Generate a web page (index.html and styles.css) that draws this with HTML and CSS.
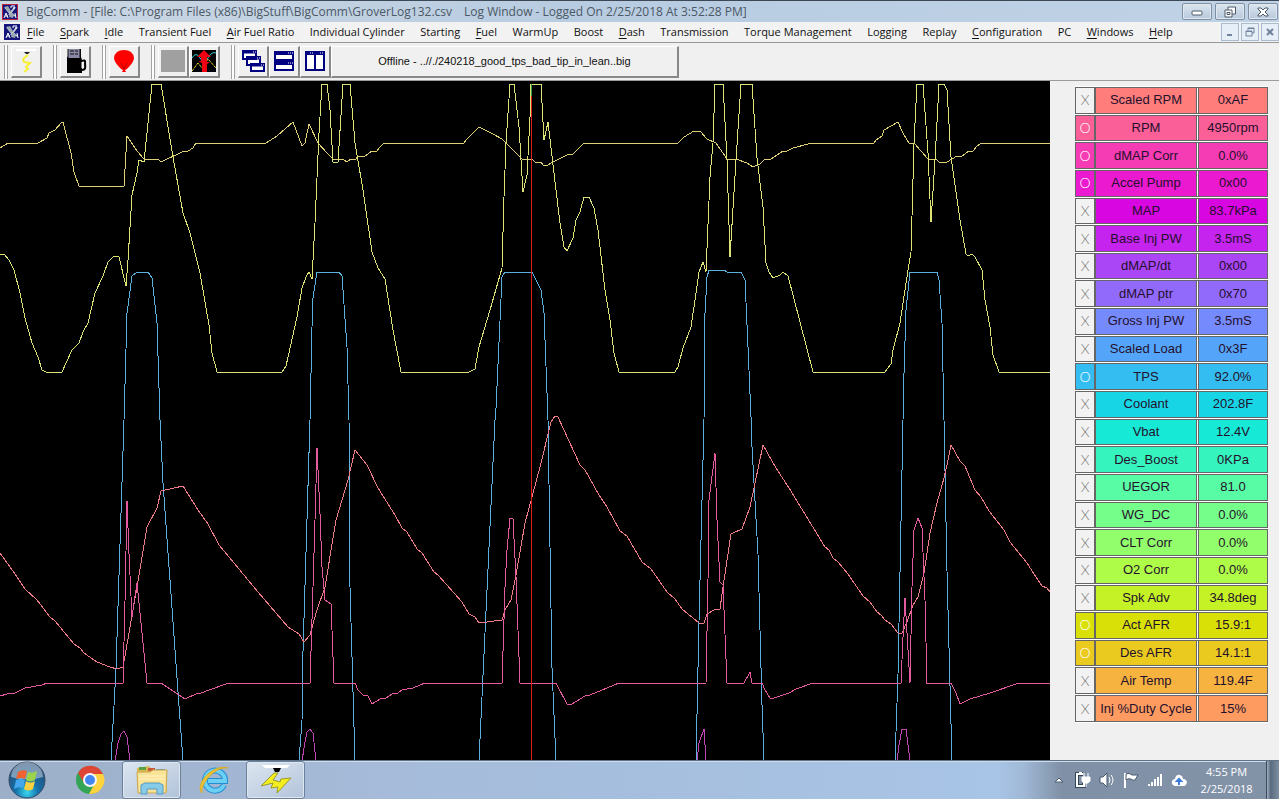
FILE: index.html
```html
<!DOCTYPE html>
<html lang="en">
<head>
<meta charset="utf-8">
<title>BigComm</title>
<link rel="stylesheet" href="styles.css">
</head>
<body>
<svg class="defs" aria-hidden="true">
  <symbol id="app-icon" viewBox="0 0 16 16">
    <path fill="#15157c" d="M0 0h16v16H0z"/>
    <path d="M3 3l4 5 6 4M13 3l-3 4-3 4" stroke="#c3ccd4" stroke-width="2" fill="none"/>
    <path d="M3 3l3-1 3 5-2 2zM8 9l4 1-1 4-4-1z" fill="#9aa7b0"/>
    <path d="M2 14l2-5 2 5M3 12h3M9 4V2h4M11 4h2M13 9l1 5" stroke="#fff" fill="none"/>
  </symbol>
</svg>
<div class="app">
  <header class="titlebar">
    <svg class="title-icon framed"><use href="#app-icon"/></svg>
    <h1 class="title"><span>BigComm - [File: C:\Program Files (x86)\BigStuff\BigComm\GroverLog132.csv</span><span>Log Window - Logged On 2/25/2018 At 3:52:28 PM]</span></h1>
    <div class="win-buttons">
      <button class="win-btn" aria-label="Minimize"><svg viewBox="0 0 12 12"><rect x="1" y="5" width="10" height="4" rx="1" fill="#fff" stroke="#4e5a68"/></svg></button>
      <button class="win-btn" aria-label="Restore"><svg viewBox="0 0 12 12"><path d="M4 1h7.500v7H4z" fill="#fff" stroke="#4e5a68"/><path d="M1 4h7v7H1z" fill="#fff" stroke="#4e5a68"/><path d="M3 6.500h3v2H3z" fill="none" stroke="#4e5a68"/></svg></button>
      <button class="win-btn" aria-label="Close"><svg viewBox="0 0 12 12"><path d="M1 2h3l2 2 2-2h3v1L8 6l3 3v1H8L6 8l-2 2H1V9l3-3-3-3z" fill="#fff" stroke="#4e5a68"/></svg></button>
    </div>
  </header>
  <nav class="menubar">
    <svg class="title-icon"><use href="#app-icon"/></svg>
    <div class="menus">
      <button><u>F</u>ile</button><button><u>S</u>park</button><button><u>I</u>dle</button><button>Transient Fuel</button><button><u>A</u>ir Fuel Ratio</button><button>Individual Cylinder</button><button>Starting</button><button><u>F</u>uel</button><button>WarmUp</button><button>Boost</button><button><u>D</u>ash</button><button>Transmission</button><button>Torque Management</button><button>Logging</button><button>Replay</button><button><u>C</u>onfiguration</button><button>PC</button><button><u>W</u>indows</button><button><u>H</u>elp</button>
    </div>
    <div class="mdi-buttons">
      <button aria-label="Minimize log"><svg viewBox="0 0 10 10"><path d="M2 8h5" stroke="#71839a" stroke-width="2"/></svg></button>
      <button aria-label="Restore log"><svg viewBox="0 0 10 10"><path d="M3 3V1h6v5H7M3 1.500h6M1 4h6v5H1zM1 4.500h6" fill="none" stroke="#71839a"/></svg></button>
      <button aria-label="Close log"><svg viewBox="0 0 10 10"><path d="M2 2l6 6M8 2L2 8" stroke="#71839a" stroke-width="2"/></svg></button>
    </div>
  </nav>
  <div class="toolbar">
    <div class="band"><button class="tool" aria-label="Spark"><svg viewBox="0 0 24 24"><path fill="#fff" d="M2 0h20v2H2z"/><path fill="#222" d="M10 3h6l-2 2h-2z"/><path d="M14 6l-5 4 1 3 6 1-4 4 2 2-4 3" fill="none" stroke="#f6f032" stroke-width="2"/></svg></button></div>
    <div class="band"><button class="tool" aria-label="Fuel"><svg viewBox="0 0 24 24"><path d="M4 8l2-1V0h12v8l1 3v13H4z"/><path fill="#8888a4" d="M5 0h12v9H5z"/><path d="M7 2h4M12 2h3M7 5h4M12 5h3M5 0v9M17 0v9" stroke="#111"/><path d="M17 13q6-4 5 2c1 6-1 6-4 6" stroke="#000" stroke-width="2" fill="none"/><path d="M19 13v6" stroke="#fff"/></svg></button></div>
    <div class="band"><button class="tool" aria-label="Record marker"><svg viewBox="0 0 24 24"><path fill="#f00" d="M2 9Q3 1 12 1q9 0 10 8 0 4-7 11l-2 1 1 2h-4l1-2-2-1Q2 13 2 9z"/><path d="M9 14l3 6 3-6" stroke="#b00" fill="none"/></svg></button></div>
    <div class="band"><button class="tool" aria-label="Stop" disabled><svg viewBox="0 0 24 24"><path fill="#a0a0a0" d="M0 1h24v22H0z"/></svg></button><button class="tool" aria-label="Load log"><svg viewBox="0 0 24 24"><path d="M0 1h24v22H0z"/><path d="M0 9q4-7 8 0t8 0 8-5" stroke="#28cbd2" fill="none"/><path d="M0 22l6-8 4 5 6-9 8 9" stroke="#eee42a" fill="none" stroke-dasharray="3 1"/><path fill="#f00010" d="M12 1l7 7h-4v5h3l-3 2v8h-5v-9l-4-2h3V8H5z"/></svg></button></div>
    <div class="band"><button class="tool" aria-label="Cascade windows"><svg viewBox="0 0 24 24"><g fill="#fff" stroke="#000080" stroke-width="2"><path d="M2 2h13v8H2zM6 8h13v8H6zM10 15h13v7H10z"/></g><path d="M1 3h15M5 9h15M9 16h15" stroke="#000080" stroke-width="3"/><path d="M12 3h1M14 3h1M16 9h1M18 9h1M20 16h1M22 16h1" stroke="#fff"/></svg></button><button class="tool" aria-label="Tile horizontally"><svg viewBox="0 0 24 24"><path d="M3 3h18v8H3zM3 13h18v8H3z" fill="#fff" stroke="#000080" stroke-width="2"/><path d="M2 4h20M2 14h20" stroke="#000080" stroke-width="4"/><path d="M16 4h1M18 4h1M20 4h1M16 14h1M18 14h1M20 14h1" stroke="#fff"/></svg></button><button class="tool" aria-label="Tile vertically"><svg viewBox="0 0 24 24"><path d="M3 3h18v18H3zM12 3v18" fill="#fff" stroke="#000080" stroke-width="2"/><path d="M2 4h20" stroke="#000080" stroke-width="4"/><path d="M7 4h1M9 4h1M17 4h1M19 4h1" stroke="#fff"/></svg></button><button class="status-btn">Offline - ..//./240218_good_tps_bad_tip_in_lean..big</button></div>
  </div>
  <main class="workspace">
    <svg class="chart" viewBox="0 81 1050 679" preserveAspectRatio="none" role="img" aria-label="Engine data log">
      <polyline class="des-afr" points="0,148 8,143 38,143 47,138 49,133 55,130 62,122 63,122 71,153 74,172 79,186 124,186 127,136 137,151 144,159 158,159 161,162 182,152 188,151 193,148 196,143 266,143 277,136 293,122 302,146 305,143 309,124 318,143 327,153 333,159 343,159 347,162 351,159 356,159 358,156 365,156 372,151 377,151 380,147 384,143 464,143 467,139 479,127 493,134 502,139 507,144 522,159 532,159 535,162 541,162 543,165 548,165 553,162 567,155 573,154 584,143 678,143 684,137 694,131 700,131 707,139 716,143 727,159 736,159 747,163 753,167 760,164 765,159 771,159 783,151 787,151 793,148 812,143 874,143 876,140 882,136 884,130 898,122 903,133 909,143 914,143 928,159 936,159 939,162 947,162 957,156 962,156 969,151 973,151 977,146 982,143 1050,143"/>
      <polyline class="act-afr" points="0,254 4,254 9,260 14,270 20,293 25,318 32,343 38,357 42,370 46,372 62,372 72,350 79,343 83,332 88,323 95,293 103,276 108,262 113,257 118,256 119,257 126,286 128,260 132,195 137,173 139,160 144,162 152,84 161,84 173,157 183,213 190,233 200,273 209,325 212,353 217,372 282,372 286,366 297,317 302,288 306,277 309,272 312,279 315,223 319,133 322,84 327,84 330,110 333,162 338,162 343,84 350,84 355,143 363,190 372,252 378,268 385,279 393,330 401,372 469,372 475,369 479,347 490,310 502,268 504,197 506,143 510,84 514,84 519,127 523,192 527,175 530,117 531,84 541,84 544,140 548,122 553,165 560,223 564,247 567,251 573,238 576,220 580,212 584,197 589,197 594,208 598,230 605,290 610,320 614,353 619,372 675,372 678,367 683,348 691,327 695,300 699,272 703,262 706,272 710,177 713,143 715,84 723,84 727,160 730,257 736,160 741,84 752,84 757,158 763,207 766,263 769,272 773,278 780,275 783,272 788,276 800,322 813,372 885,372 891,364 893,350 900,323 906,283 911,252 914,143 917,84 923,84 928,153 931,222 935,160 939,84 944,84 947,90 951,157 960,220 966,254 968,256 972,254 975,257 982,270 985,300 990,327 993,355 999,372 1050,372"/>
      <polyline class="tps" points="111,761 116,669 124,420 127,313 132,276 137,272 148,272 152,278 157,323 160,420 163,483 183,761"/>
      <polyline class="tps" points="299,761 302,721 303,651 310,420 312,327 313,298 317,272 339,272 342,276 347,347 349,420 350,587 355,761"/>
      <polyline class="tps" points="479,761 484,654 495,420 496,408 502,277 505,272 532,272 541,290 544,313 547,393 548,420 550,547 552,668 556,761"/>
      <polyline class="tps" points="696,761 699,621 704,420 705,313 707,277 709,270 724,270 727,272 741,272 745,280 748,347 751,417 752,447 758,554 762,705 764,761"/>
      <polyline class="tps" points="895,761 898,674 903,420 904,373 906,310 910,272 937,272 939,280 942,323 944,420 947,571 952,761"/>
      <polyline class="rpm" points="0,553 15,574 25,589 37,600 50,617 55,621 74,644 80,648 84,653 97,662 110,667 117,669 123,667 129,633 137,587 147,527 157,508 161,491 183,486 198,510 208,524 219,545 234,563 258,592 276,613 288,627 299,634 304,642 310,635 316,613 325,587 336,520 348,480 355,450 367,465 378,488 395,515 402,528 407,532 417,549 422,553 434,572 438,575 462,602 469,614 475,617 479,623 502,620 505,610 511,600 516,575 525,523 532,497 540,467 551,422 555,416 558,417 580,465 585,470 599,495 607,507 620,531 627,536 642,562 651,569 667,592 675,599 682,609 699,623 704,623 707,614 714,610 720,609 723,587 726,567 731,534 742,529 750,507 763,445 776,468 789,488 825,547 829,550 833,558 838,562 848,574 863,596 870,602 877,612 881,615 885,620 891,624 898,633 902,633 907,622 913,605 918,597 924,573 930,533 937,503 944,478 947,465 951,445 960,461 965,466 975,490 981,497 989,511 1004,530 1010,542 1027,563 1034,574 1042,586 1047,588 1050,592"/>
      <polyline class="dmap" points="0,696 7,694 15,693 25,688 42,685 47,683 123,683 125,601 127,501 129,554 132,617 137,583 147,683 161,683 185,699 196,694 201,693 209,690 229,683 310,683 313,587 315,520 317,448 320,514 322,567 325,600 331,604 334,683 355,683 358,690 363,695 368,696 372,704 380,699 386,698 392,694 398,693 402,690 413,688 425,683 502,683 505,587 507,550 510,518 513,519 516,577 520,683 556,683 567,704 572,704 585,696 590,695 619,683 706,683 708,580 709,500 715,453 717,520 720,582 723,585 727,683 744,683 750,672 752,683 762,683 765,690 770,698 774,698 789,693 796,689 813,683 901,683 903,637 905,598 907,633 910,683 912,587 914,530 918,518 922,528 925,600 927,683 951,683 956,693 960,704 970,699 990,693 1019,683 1050,683"/>
      <path class="accel" d="M115 761L118 743L121 734L124 731L127 737L130 761M302 761L305 742L307 732L310 729L313 733L316 761M697 761L699 743L704 729L706 761M897 761L899 745L902 729L906 729L910 761"/>
      <rect class="cursor-top" x="531" y="84" width="1" height="12"/>
      <rect class="cursor" x="531" y="96" width="1" height="664"/>
    </svg>
    <aside class="panel">
      <table class="channels" aria-label="Logged channels"><tbody id="channels"></tbody></table>
    </aside>
  </main>
  <footer class="taskbar">
    <button class="start" aria-label="Start"><svg viewBox="0 0 38 38"><defs><radialGradient id="orb" cx=".5" cy=".85" r=".8"><stop offset="0" stop-color="#39d6ee"/><stop offset=".4" stop-color="#1370a9"/><stop offset="1" stop-color="#2b4a70"/></radialGradient></defs><circle cx="19" cy="19" r="18" fill="url(#orb)" stroke="#344b66"/><path d="M3 16a16 15 0 0 1 32 0q-16 5-32 0z" fill="#c6d6e3" opacity=".55"/><path d="M10 11q4-3 9-1l-2 8q-4-2-9 0z" fill="#ee6330"/><path d="M20 11q4 2 9-1l-2 9q-5 3-9 0z" fill="#9bd34a"/><path d="M8 19q4-2 9 0l-2 8q-4-2-9 1z" fill="#45a8ee"/><path d="M18 20q4 3 9 0l-2 8q-5 3-9 0z" fill="#fbd040"/></svg></button>
    <button class="task" aria-label="Chrome"><svg viewBox="0 0 32 32"><circle cx="16" cy="16" r="14" fill="#34a456"/><path d="M4 9A14 14 0 0 1 29 10H16l-6 9z" fill="#df4535"/><path d="M29 10A14 14 0 0 1 15 30l7-13-3-7z" fill="#fdd23e"/><circle cx="16" cy="16" r="7" fill="#f4f6fa"/><circle cx="16" cy="16" r="5" fill="#4386ef"/></svg></button>
    <button class="task running" aria-label="Explorer"><svg viewBox="0 0 32 32"><path d="M1 4l12-2 3 4h13l2 2v20H2z" fill="#dcb750"/><path d="M3 3h7v3H3z" fill="#58a343"/><path d="M12 4h7v3h-7z" fill="#c95838"/><path d="M20 5h9v3h-9z" fill="#4f91c9"/><path d="M1 8h13l3-2h14l-1 23H2z" fill="#f8e397" stroke="#caa54c"/><path d="M3 12h26M3 15h26" stroke="#fff5c5"/><path d="M5 21l4-2h14l4 2v9h-6v-5H11v5H5z" fill="#88cbe9" stroke="#5499c3"/></svg></button>
    <button class="task" aria-label="Internet Explorer"><svg viewBox="0 0 32 32"><path d="M26 21A10 10 0 1 1 27 17H10" fill="none" stroke="#268cd0" stroke-width="6"/><path d="M26 21A10 10 0 1 1 27 17H10" fill="none" stroke="#6bd0f4" stroke-width="4"/><path d="M4 29C-4 21 15-1 30 4c-13-2-28 16-26 25z" fill="#ecc438" stroke="#d7ac29"/></svg></button>
    <button class="task running" aria-label="BigComm"><svg viewBox="0 0 32 32"><path fill="#fff" d="M2 1h28l-3 3H5z"/><path d="M13 4h8l-2 4h-4z"/><path d="M14 9h4l-5 7 7 2 1-3 10-1-14 15 1-6-7 1 2-5-12 3z" fill="#f4ee20" stroke="#9a9b25"/></svg></button>
    <div class="tray">
      <svg class="caret" viewBox="0 0 16 16"><path d="M4 10l4-4 4 4z" fill="#fff" stroke="#465c72"/></svg>
      <svg viewBox="0 0 16 16"><path d="M8 2H2v12h7v-3" fill="none" stroke="#334559" stroke-width="4"/><path d="M8 2H2v12h7v-3M4 1h3" fill="none" stroke="#fff" stroke-width="2"/><path d="M7 5h8v4l-2 2H9L7 9zM9 1v4M13 1v4M11 10v5" fill="#fff" stroke="#fff"/></svg>
      <svg viewBox="0 0 16 16"><path d="M1 5h3l4-4v14l-4-4H1z" fill="#fff" stroke="#47596c"/><path d="M10 5q2 3 0 6M12 3q4 5 0 10" fill="none" stroke="#fff"/></svg>
      <svg viewBox="0 0 16 16"><path d="M2 1v15" stroke="#fff" stroke-width="2"/><path d="M3 2q3-2 6 1h6l-3 5q-2 1-4-1-3-1-5 1z" fill="#fff" stroke="#46596e"/></svg>
      <svg viewBox="0 0 16 16"><path d="M2 12v2M5 10v4M8 7v7M11 5v9M14 2v12" stroke="#fff" stroke-width="2"/></svg>
      <svg viewBox="0 0 16 16"><path d="M4 14q-4-1-3-5 1-2 3-2 1-5 5-4 3 1 3 4 3 0 4 3-1 4-3 4z" fill="#fff"/><path d="M8 13V8M6 9l2-2 2 2z" fill="#397cdd" stroke="#397cdd" stroke-width="2"/></svg>
    </div>
    <div class="clock"><time>4:55 PM</time><span>2/25/2018</span></div>
    <button class="show-desktop" aria-label="Show desktop"></button>
  </footer>
</div>
<script src="script.js"></script>
</body>
</html>
```
FILE: styles.css
```css
* { box-sizing: border-box; }
body { margin: 0; font-family: "Open Sans", "Noto Sans", sans-serif; font-size: 11px; color: #111; }
button { font: inherit; color: inherit; background: none; border: 0; padding: 0; margin: 0; }
svg { display: block; }
.defs { width: 0; height: 0; position: absolute; }
.app { display: flex; flex-direction: column; height: 100vh; background: #f0f0f0; }

.titlebar { display: flex; align-items: center; height: 22px; padding: 0 1px 0 2px; border-top: 1px solid #3c4856; background: linear-gradient(90deg, #ccd7e2, #b8cce1 45%, #bfd2e6); }
.title-icon { flex: none; width: 16px; height: 16px; }
.framed { outline: 1px solid #b8243c; outline-offset: -1px; }
.title { display: flex; gap: 12px; flex: 1; margin: 0 0 0 8px; font-size: 12px; font-weight: 400; color: #4b5865; white-space: nowrap; }
.win-buttons { display: flex; gap: 3px; }
.win-btn { display: grid; place-items: center; width: 30px; height: 17px; border: 1px solid #7f90a3; border-radius: 2px; background: linear-gradient(#dbe5ef, #b7c9dc); box-shadow: inset 0 0 0 1px #dfe8f1; }
.win-btn svg { width: 12px; height: 12px; }

.menubar { display: flex; align-items: center; height: 21px; padding-left: 4px; border-bottom: 1px solid #979797; background: #f2f2f2; }
.menus { display: flex; flex: 0 1 1146px; justify-content: space-between; margin: 0 auto 0 7px; }
.menus button { line-height: 18px; white-space: nowrap; }
.menus u { text-underline-offset: 2px; }
.mdi-buttons { display: flex; gap: 2px; }
.mdi-buttons button { display: grid; place-items: center; width: 18px; height: 18px; border: 1px solid #a9bccf; background: #e6eff8; }
.mdi-buttons svg { width: 10px; height: 10px; }

.toolbar { display: flex; align-items: center; gap: 11px; height: 38px; padding: 0 4px; border-bottom: 1px solid #9b9b9b; }
.band { display: flex; align-items: center; height: 34px; padding-left: 6px; border-left: 1px solid #a3a3a3; box-shadow: inset 2px 0 #fff, inset 3px 0 #a3a3a3; }
.tool { display: grid; place-items: center; width: 31px; height: 32px; }
.tool, .status-btn { border: 1px solid; border-color: #fff #888 #888 #fff; border-right-width: 2px; border-bottom-width: 2px; background: #f0f0f0; }
.tool svg { width: 24px; height: 24px; }
.status-btn { width: 348px; height: 32px; font-family: "Liberation Sans", Arial, sans-serif; font-size: 11px; }

.workspace { display: flex; flex: 1; min-height: 0; }
.chart { flex: 1; min-width: 0; height: 100%; background: #000; }
.chart polyline, .chart path { fill: none; stroke-width: 1; shape-rendering: crispEdges; vector-effect: non-scaling-stroke; }
.des-afr { stroke: #dfd076; }
.act-afr { stroke: #dce274; }
.tps { stroke: #5cb0dc; }
.rpm { stroke: #ee7c86; }
.dmap { stroke: #e45a9e; }
.accel { stroke: #c044b4; }
.cursor { fill: #e01c1c; }
.cursor-top { fill: #2f9a40; }

.panel { flex: none; padding: 5px 11px 37px 25px; }
.channels { width: 193px; height: 100%; table-layout: fixed; border-spacing: 0 1px; background: #fff; font: 13px/16px "Liberation Sans", Arial, sans-serif; color: #24102c; }
.channels td, .channels th { padding: 0; border: 1px solid #666; text-align: center; font-weight: 400; white-space: nowrap; background-clip: padding-box; background-color: var(--channel); }
.channels td:first-child { width: 20px; background-color: #f2f2f2; }
.channels .shown td:first-child { background-color: var(--channel); }
.channels th { border-right: 0; }
.channels td:last-child { width: 72px; border-left: 3px double #666; }
.toggle { display: block; width: 100%; font: 300 14px/20px Lato, sans-serif; color: #777; }
.shown .toggle { color: #fff; }

.taskbar { display: flex; align-items: stretch; height: 39px; padding-left: 8px; border-top: 1px solid #5e7288; box-shadow: inset 0 1px #d0dcea; background: linear-gradient(90deg, #9dafc8, #a5bbd9 30%, #a8c4e6 78%, #a0b9d7 80%, #8091a7 83%, #8293a8); }
.start { width: 38px; display: grid; place-items: center; }
.start svg { width: 38px; height: 38px; }
.task { display: grid; place-items: center; width: 59px; margin-left: 3px; }
.task:nth-child(2) { margin-left: 14px; }
.task svg { width: 32px; height: 32px; }
.running { border: 1px solid #6d819b; border-radius: 3px; background: linear-gradient(150deg, #dce6f1, #b2c3d9); box-shadow: inset 0 0 0 1px #dde7f2; }
.tray { display: flex; align-items: center; gap: 8px; margin-left: auto; }
.tray svg { width: 16px; height: 16px; }
.clock { display: flex; flex-direction: column; align-items: center; justify-content: center; width: 79px; font-size: 11px; line-height: 17px; color: #fff; }
.show-desktop { width: 13px; border-left: 1px solid #3b4b5e; background: linear-gradient(90deg, #a0afbf, #5b6b7e 30%, #7f8fa2); }
```
FILE: script.js
```js
const channels = [
  ["Scaled RPM", "0xAF", "#ff7d7b", false],
  ["RPM", "4950rpm", "#fb5f98", true],
  ["dMAP Corr", "0.0%", "#f63cb4", true],
  ["Accel Pump", "0x00", "#eb1ad0", true],
  ["MAP", "83.7kPa", "#d806e0", false],
  ["Base Inj PW", "3.5mS", "#c424ee", false],
  ["dMAP/dt", "0x00", "#aa46f6", false],
  ["dMAP ptr", "0x70", "#916afb", false],
  ["Gross Inj PW", "3.5mS", "#758afd", false],
  ["Scaled Load", "0x3F", "#54a5fa", false],
  ["TPS", "92.0%", "#34bdf0", true],
  ["Coolant", "202.8F", "#18d5e5", false],
  ["Vbat", "12.4V", "#16e9d6", false],
  ["Des_Boost", "0KPa", "#36f4bd", false],
  ["UEGOR", "81.0", "#57fca4", false],
  ["WG_DC", "0.0%", "#76fe8a", false],
  ["CLT Corr", "0.0%", "#93fe6b", false],
  ["O2 Corr", "0.0%", "#aefb48", false],
  ["Spk Adv", "34.8deg", "#c5f226", false],
  ["Act AFR", "15.9:1", "#d9e008", true],
  ["Des AFR", "14.1:1", "#ebca20", true],
  ["Air Temp", "119.4F", "#f6b340", false],
  ["Inj %Duty Cycle", "15%", "#fd9b60", false]
];

const body = document.getElementById("channels");
for (const [name, value, color, shown] of channels) {
  const row = body.insertRow();
  row.style.setProperty("--channel", color);
  row.classList.toggle("shown", shown);
  const toggle = document.createElement("button");
  toggle.className = "toggle";
  toggle.textContent = shown ? "O" : "X";
  toggle.setAttribute("aria-label", "Show " + name);
  toggle.setAttribute("aria-pressed", shown);
  row.insertCell().append(toggle);
  const label = document.createElement("th");
  label.scope = "row";
  label.textContent = name;
  row.append(label);
  row.insertCell().textContent = value;
}
```
